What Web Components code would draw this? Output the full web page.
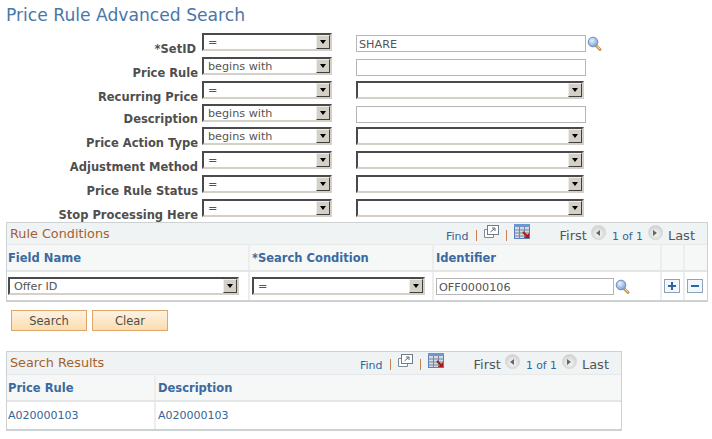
<!DOCTYPE html>
<html>
<head>
<meta charset="utf-8">
<style>
  html, body { margin: 0; padding: 0; background: #fff; }
  body { font-family: "DejaVu Sans", Verdana, sans-serif; font-size: 11px; }
</style>
</head>
<body>
<search-page></search-page>
<script>
const ICONS = {
  lookup: `<svg width="15" height="15" viewBox="0 0 15 15"><defs><radialGradient id="g" cx=".4" cy=".35" r=".7"><stop offset="0" stop-color="#e8f2fc"/><stop offset="1" stop-color="#6d9fdc"/></radialGradient></defs><path d="M9 9.500l4 4" stroke="#c79a55" stroke-width="3" stroke-linecap="round"/><path d="M9.500 9.500l3.500 3.500" stroke="#f2d9a6"/><circle cx="6" cy="6" r="4.800" fill="url(#g)" stroke="#6c8db5"/></svg>`,
  zoom: `<svg width="15" height="13" viewBox="0 0 15 13"><path d="M3.500 4.500h-3v8h9v-3" fill="#fff" stroke="#7d8a97"/><rect x="3.500" y=".5" width="11" height="9" fill="#fff" stroke="#6f7c8a"/><path d="M6.500 7l4-3.500M8 3h3v3" fill="none" stroke="#566575"/></svg>`,
  download: `<svg width="16" height="15" viewBox="0 0 16 15"><rect x=".5" y=".5" width="15" height="14" fill="#d5dbe6" stroke="#5b7fb5"/><rect x="0" y="0" width="16" height="3" fill="#6f97cf"/><path d="M5.500 3v11.500M10.500 3v11.500M1 6h14M1 9h14M1 12h14" stroke="#77879b"/><path d="M9 8l4 4" stroke="#b01818" stroke-width="2"/><path d="M15 9v5h-5z" fill="#b01818"/></svg>`
};

class PsSelect extends HTMLElement {
  connectedCallback() {
    const w = this.getAttribute('width') || 130;
    this.attachShadow({ mode: 'open' }).innerHTML = `
      <style>
        :host { display: block; width: ${w}px; height: 18px; box-sizing: border-box; }
        .box {
          display: flex; height: 100%; box-sizing: border-box; background: #fff;
          border: 2px solid; border-color: #4a4a4a #d4d0c8 #d4d0c8 #4a4a4a;
        }
        .val { flex: 1; padding-left: 4px; line-height: 15px; color: #555; white-space: nowrap; overflow: hidden; font-size: 11.2px; }
        .btn {
          width: 14px; height: 14px; box-sizing: border-box; background: #d4d0c8;
          border: 1px solid; border-color: #efeee9 #404040 #404040 #efeee9;
          display: flex; align-items: center; justify-content: center;
        }
        .btn i { width: 0; height: 0; border: 3.500px solid transparent; border-top: 4px solid #000; border-bottom: 0; }
      </style>
      <div class="box"><div class="val">${this.getAttribute('value') || ''}</div><div class="btn"><i></i></div></div>`;
  }
}

class PsInput extends HTMLElement {
  connectedCallback() {
    const w = this.getAttribute('width') || 230;
    this.attachShadow({ mode: 'open' }).innerHTML = `
      <style>
        :host { display: block; width: ${w}px; height: 17px; box-sizing: border-box; }
        .box { height: 100%; box-sizing: border-box; border: 1px solid #b5b5b5; padding-left: 2px; color: #555; line-height: 17px; font-size: 11.2px; background: #fff; }
      </style>
      <div class="box">${this.getAttribute('value') || ''}</div>`;
  }
}

class FormRow extends HTMLElement {
  connectedCallback() {
    const h = this.getAttribute('h') || 24;
    const inset = this.getAttribute('inset') || 0;
    const top = this.getAttribute('top') || 9;
    this.attachShadow({ mode: 'open' }).innerHTML = `
      <style>
        :host { display: grid; grid-template-columns: 192px 130px auto; column-gap: 4px; height: ${h}px; }
        .lbl { text-align: right; font-weight: bold; color: #4f4f4f; padding: ${top}px ${inset}px 0 0; white-space: nowrap; line-height: 14px; font-size: 11.5px; }
        .c2 { display: flex; gap: 1px; margin-left: 20px; }
      </style>
      <div class="lbl"><slot name="label"></slot></div>
      <div><slot name="op"></slot></div>
      <div class="c2"><slot name="val"></slot></div>`;
  }
}

class GridBar extends HTMLElement {
  connectedCallback() {
    const h = this.getAttribute('h') || 21;
    this.attachShadow({ mode: 'open' }).innerHTML = `
      <style>
        :host { display: flex; height: ${h}px; background: #eff3f4; border-bottom: 1px solid #e6e8e9; }
        .t { color: #a65f2b; font-size: 12.800px; line-height: 21px; padding-left: 3px; flex: 1; }
        .tools { display: flex; color: #336699; font-size: 11px; line-height: 13px; }
        .tools span:first-child { margin-top: 7px; }
        .sep { width: 1px; height: 11px; margin: 7px 7px 0; background: #c9804f; }
        .icon { display: flex; height: 15px; }
        .i1 { margin-top: 2px; }
        .i2 { margin-top: 1px; }
        .nav { display: flex; margin-left: 30px; margin-right: 12px; color: #555; font-size: 13px; line-height: 14px; }
        .nav > span { margin-top: 6px; }
        .nav .pg { color: #336699; font-size: 10.800px; margin: 7px 5px 0 6px; }
        .nav .c { width: 15px; height: 15px; border-radius: 50%; margin: 2px 0 0 4px; background: radial-gradient(circle at 50% 60%, #fafafa, #c4c4c4); border: 1px solid #d6d6d6; box-sizing: border-box; display: flex; align-items: center; justify-content: center; }
        .nav .c.n { margin: 2px 5px 0 0; }
        .l { border: 3px solid transparent; border-right: 4px solid #666; border-left: 0; }
        .r { border: 3px solid transparent; border-left: 4px solid #666; border-right: 0; }
      </style>
      <div class="t">${this.getAttribute('title')}</div>
      <div class="tools">
        <span>Find</span><span class="sep"></span>
        <span class="icon i1">${ICONS.zoom}</span><span class="sep"></span>
        <span class="icon i2">${ICONS.download}</span>
      </div>
      <div class="nav"><span>First</span><span class="c"><i class="l"></i></span><span class="pg">1 of 1</span><span class="c n"><i class="r"></i></span><span>Last</span></div>`;
  }
}

class PsButton extends HTMLElement {
  connectedCallback() {
    this.attachShadow({ mode: 'open' }).innerHTML = `
      <style>
        :host { display: block; width: 76px; height: 21px; box-sizing: border-box; border: 1px solid #dfa669; background: linear-gradient(#fdf3e2, #fcdcae); color: #4d4d4d; text-align: center; line-height: 20px; font-size: 11.500px; }
      </style><slot></slot>`;
  }
}

class PsIcon extends HTMLElement {
  connectedCallback() {
    this.attachShadow({ mode: 'open' }).innerHTML = `
      <style>:host { display: block; height: 15px; } svg { display: block; }</style>${ICONS[this.getAttribute('name')]}`;
  }
}

class AddDel extends HTMLElement {
  connectedCallback() {
    const minus = this.getAttribute('type') === 'minus';
    this.attachShadow({ mode: 'open' }).innerHTML = `
      <style>:host { display: block; width: 16px; height: 14px; } svg { display: block; }</style>
      <svg width="16" height="14" viewBox="0 0 16 14"><rect x=".5" y=".5" width="15" height="13" fill="#f3f6fa" stroke="#8fa3bc"/><path d="M4 7h8${minus ? '' : 'M8 3v8'}" stroke="#2f659f" stroke-width="2"/></svg>`;
  }
}

class DataGrid extends HTMLElement {
  connectedCallback() {
    const cols = this.getAttribute('cols');
    const rowH = this.getAttribute('row-h') || 28;
    this.attachShadow({ mode: 'open' }).innerHTML = `
      <style>
        :host { display: block; box-sizing: border-box; border: solid #ccd1d4; border-width: 1px 1px 2px 1px; }
        .head, .row { display: grid; grid-template-columns: ${cols}; }
        .head { height: 25px; background: #f6f7f7; border-bottom: 2px solid #e4e6e6; }
        .row { height: ${rowH}px; }
      </style>
      <slot name="bar"></slot>
      <div class="head"><slot name="head"></slot></div>
      <div class="row"><slot name="row"></slot></div>`;
  }
}

class GridCell extends HTMLElement {
  connectedCallback() {
    this.attachShadow({ mode: 'open' }).innerHTML = `
      <style>
        :host { display: flex; align-items: center; gap: 1px; box-sizing: border-box; padding-left: 2px; border-right: 2px solid #eceeee; white-space: nowrap; min-width: 0; }
        :host([first]) { padding-left: 1px; }
        :host([last]) { border-right: 0; }
        :host([head]) { font-weight: bold; color: #3a6a9e; font-size: 11.500px; }
        :host([link]) { color: #336699; font-size: 11px; }
      </style><slot></slot>`;
  }
}

class SearchPage extends HTMLElement {
  connectedCallback() {
    const rows = [
      ['*SetID', '=', 'in', 'SHARE', true, 24, 2, 9],
      ['Price Rule', 'begins with', 'in', '', false, 24, 0, 9],
      ['Recurring Price', '=', 'sel', '', false, 23, 0, 9],
      ['Description', 'begins with', 'in', '', false, 23, 0, 8],
      ['Price Action Type', 'begins with', 'sel', '', false, 24, 0, 9],
      ['Adjustment Method', '=', 'sel', '', false, 24, 0, 9],
      ['Price Rule Status', '=', 'sel', '', false, 24, 0, 9],
      ['Stop Processing Here', '=', 'sel', '', false, 23, 0, 9]
    ];
    const rowHtml = rows.map(([label, op, kind, val, look, h, ins, top]) => `
      <form-row h="${h}" inset="${ins}" top="${top}">
        <span slot="label">${label}</span>
        <ps-select slot="op" value="${op}" width="130"></ps-select>
        ${kind === 'in'
          ? `<ps-input slot="val" value="${val}" width="230" style="margin-top:2px"></ps-input>`
          : `<ps-select slot="val" width="228"></ps-select>`}
        ${look ? `<ps-icon slot="val" name="lookup" style="margin-top:3px"></ps-icon>` : ''}
      </form-row>`).join('');

    this.attachShadow({ mode: 'open' }).innerHTML = `
      <style>
        :host { display: block; width: 712px; height: 439px; overflow: hidden; box-sizing: border-box; padding: 6px 0 0 6px; }
        h1 { margin: 0; height: 27px; font-weight: normal; font-size: 17.150px; line-height: 19px; color: #4a76a8; white-space: nowrap; }
        .form { height: 189px; }
        .grid1 { width: 702px; }
        .grid2 { width: 616px; margin-top: 20px; }
        .btns { display: flex; gap: 5px; margin: 8px 0 0 5px; }
      </style>
      <h1>Price Rule Advanced Search</h1>
      <div class="form">${rowHtml}</div>
      <data-grid class="grid1" cols="243px 184px 228px 23px 1fr">
        <grid-bar slot="bar" title="Rule Conditions"></grid-bar>
        <grid-cell slot="head" head first>Field Name</grid-cell>
        <grid-cell slot="head" head>*Search Condition</grid-cell>
        <grid-cell slot="head" head>Identifier</grid-cell>
        <grid-cell slot="head"></grid-cell>
        <grid-cell slot="head" last></grid-cell>
        <grid-cell slot="row" first><ps-select value="Offer ID" width="231"></ps-select></grid-cell>
        <grid-cell slot="row"><ps-select value="=" width="173"></ps-select></grid-cell>
        <grid-cell slot="row"><ps-input value="OFF0000106" width="178"></ps-input><ps-icon name="lookup"></ps-icon></grid-cell>
        <grid-cell slot="row"><add-del type="plus"></add-del></grid-cell>
        <grid-cell slot="row" last><add-del type="minus"></add-del></grid-cell>
      </data-grid>
      <div class="btns"><ps-button>Search</ps-button><ps-button>Clear</ps-button></div>
      <data-grid class="grid2" cols="149px 1fr" row-h="27">
        <grid-bar slot="bar" title="Search Results" h="22"></grid-bar>
        <grid-cell slot="head" head first>Price Rule</grid-cell>
        <grid-cell slot="head" head last>Description</grid-cell>
        <grid-cell slot="row" link first>A020000103</grid-cell>
        <grid-cell slot="row" link last>A020000103</grid-cell>
      </data-grid>`;
  }
}

customElements.define('ps-select', PsSelect);
customElements.define('ps-input', PsInput);
customElements.define('form-row', FormRow);
customElements.define('grid-bar', GridBar);
customElements.define('ps-button', PsButton);
customElements.define('ps-icon', PsIcon);
customElements.define('add-del', AddDel);
customElements.define('data-grid', DataGrid);
customElements.define('grid-cell', GridCell);
customElements.define('search-page', SearchPage);
</script>
</body>
</html>
